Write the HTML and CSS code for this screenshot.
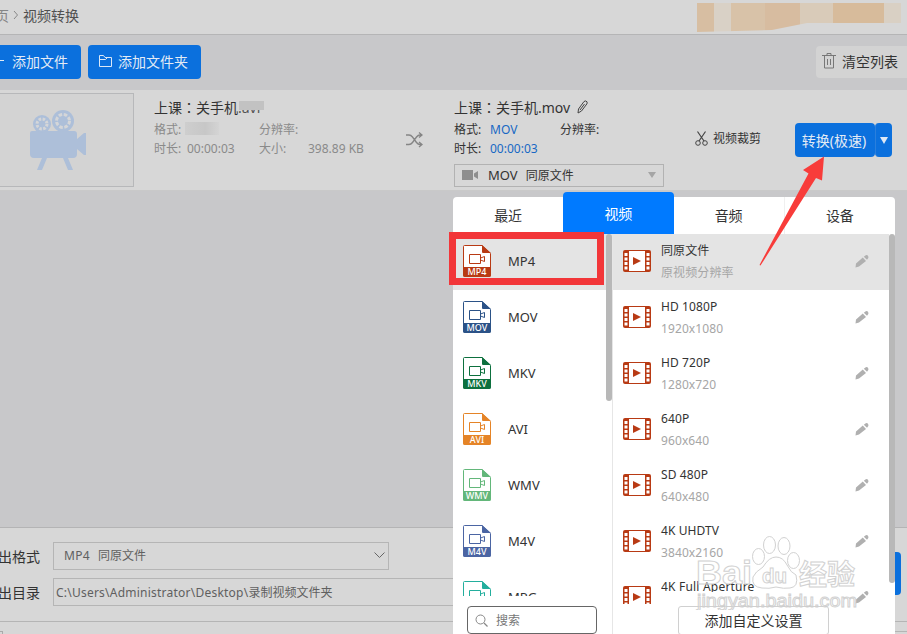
FILE: index.html
```
<!DOCTYPE html>
<html lang="zh-CN">
  <head>
    <meta charset="utf-8">
    <title>视频转换</title>
    <link rel="stylesheet" href="styles.css">
  </head>
  <body>
    <svg width="0" height="0" class="defs">
      <symbol id="icon-file" viewBox="0 0 28 32">
        <path d="M1.5.5H19L27.500 8.500V30.500a1 1 0 0 1-1 1H1.500a1 1 0 0 1-1-1V1.500a1 1 0 0 1 1-1z" fill="#fff" stroke="currentColor"/>
        <path d="M19 0L28 8H20a1 1 0 0 1-1-1zM0 22H28V30a2 2 0 0 1-2 2H2a2 2 0 0 1-2-2z" fill="currentColor"/>
        <path d="M6.500 9.500H17.500V18.500H6.500zM17.500 13L21.500 11.500V16.500L17.500 15" fill="none" stroke="currentColor"/>
      </symbol>
      <symbol id="icon-film" viewBox="0 0 28 22">
        <rect x="0" y="0" width="28" height="22" rx="2" fill="#b83a14"/>
        <path d="M6 1h16v20h-16zM1.500 3h3v3h-3zM1.500 7.500h3v3h-3zM1.500 12h3v3h-3zM1.500 16.500h3v3h-3zM23.500 3h3v3h-3zM23.500 7.500h3v3h-3zM23.500 12h3v3h-3zM23.500 16.500h3v3h-3z" fill="#fff"/>
        <path d="M10 7L18 11L10 15z" fill="#b83a14"/>
      </symbol>
      <symbol id="icon-pencil" viewBox="0 0 14 14">
        <path d="M1 9.500L7.800 3.600L11 7L4 12.500L.5 13.500zM8.800 2.700L10.800 1.200Q12 .6 12.800 1.600L13.300 2.400Q13.800 3.500 12.800 4.700L12 5.800z" fill="#b0b0b0"/>
      </symbol>
    </svg>

    <div class="app">
      <div class="breadcrumb">
        <span class="crumb-home">页</span>
        <svg class="crumb-arrow" width="6" height="10" viewBox="0 0 6 10"><path d="M1 1l3.500 4L1 9" fill="none" stroke="#888"/></svg>
        <span>视频转换</span>
        <div class="censored"></div>
      </div>

      <div class="toolbar">
        <button class="btn btn-add">
          <svg width="10" height="12" viewBox="0 0 10 12"><path d="M0 5.500h4" stroke="#e3ebf5"/></svg>
          添加文件
        </button>
        <button class="btn btn-folder">
          <svg width="13" height="12" viewBox="0 0 13 12"><path d="M.5 11.500V.5h4l1.500 2h6.500v9zM.5 4.500h6l2-2" fill="none" stroke="#dbe8f7"/></svg>
          添加文件夹
        </button>
        <button class="btn-clear">
          <svg width="14" height="16" viewBox="0 0 14 16"><path d="M0 2.500h14M5 2V.5h4V2M2.500 3v12h9V3M5.500 6v6M8.500 6v6" fill="none" stroke="#777"/></svg>
          清空列表
        </button>
      </div>

      <div class="task">
        <div class="thumb">
          <svg width="56" height="62" viewBox="0 0 56 62" fill="#adbfd9">
            <path d="M2 21H44Q47 21 47 24V44Q47 48 43 48H4Q0 48 0 44V23Q0 21 2 21zM47 29L54 23H56V45H54L47 39zM12 48h5l-5 12H7zM33 48h5l5 12h-5z"/>
            <circle cx="12" cy="14" r="9"/>
            <circle cx="33" cy="11" r="11"/>
            <g fill="none" stroke="#d5d6d8" stroke-width="3">
              <circle cx="12" cy="14" r="5" stroke-dasharray="2.500 1.430"/>
              <circle cx="33" cy="11" r="6.500" stroke-dasharray="3.500 1.600"/>
            </g>
          </svg>
        </div>
        <div class="info source">
          <div class="info-name"><span>上课</span><span class="colon" lang="zh-TW">：</span><span>关手机</span><span class="smudged">.avi</span></div>
          <div class="info-line"><span class="col-key">格式:</span><span class="col-value"><i class="smudge"></i></span><span>分辨率:</span></div>
          <div class="info-line"><span class="col-key">时长:</span><span class="col-value">00:00:03</span><span class="col-size">大小:</span><span>398.89 KB</span></div>
        </div>
        <svg class="shuffle" width="17" height="16" viewBox="0 0 17 16"><path d="M0 3h3q2 0 3.500 2l4 5.500Q12 12.500 14 12.500h2M0 12.500h3q2 0 3.500-2l4-5.500Q12 3 14 3h2M13 .5L16 3l-3 2.500M13 10l3 2.500L13 15" fill="none" stroke="#858585" stroke-width="1.300"/></svg>
        <div class="info target">
          <div class="info-name"><span>上课</span><span class="colon" lang="zh-TW">：</span><span>关手机.mov</span>
            <svg class="rename" width="11" height="14" viewBox="0 0 11 14"><path d="M1 13L1.500 9L7 1.500Q8.500.2 10 1.800Q10.500 3 9.800 4L4.500 11zM3 10L7.500 4" fill="none" stroke="#444"/></svg>
          </div>
          <div class="info-line"><span class="col-key">格式:</span><span class="col-value blue">MOV</span><span>分辨率:</span></div>
          <div class="info-line"><span class="col-key">时长:</span><span class="col-value blue">00:00:03</span></div>
          <div class="format-select">
            <svg width="16" height="10" viewBox="0 0 16 10"><path d="M0 0h11v10H0zM12 3.500L16 1v8l-4-2.500z" fill="#8e8e8e"/></svg>
            <span class="format-name">MOV</span>
            <span>同原文件</span>
            <svg class="select-arrow" width="8" height="6" viewBox="0 0 8 6"><path d="M0 0h8L4 6z" fill="#a5a5a5"/></svg>
          </div>
        </div>
        <div class="trim">
          <svg width="13" height="15" viewBox="0 0 13 15"><path d="M2.500.5L9 10M10.500.5L4 10" stroke="#444" stroke-width="1.200"/><circle cx="3" cy="12" r="2.300" fill="none" stroke="#444"/><circle cx="10" cy="12" r="2.300" fill="none" stroke="#444"/></svg>
          视频裁剪
        </div>
        <button class="convert">转换(极速)</button>
        <button class="convert-more"><svg width="8" height="7" viewBox="0 0 8 7"><path d="M0 0h8L4 7z" fill="#dfe9f5"/></svg></button>
      </div>

      <div class="task-list"></div>

      <div class="footer">
        <div class="footer-row">
          <label>出格式</label>
          <div class="output-format"><span class="output-type">MP4</span><span>同原文件</span>
            <svg width="11" height="7" viewBox="0 0 11 7"><path d="M.5.5l5 5 5-5" fill="none" stroke="#666"/></svg>
          </div>
        </div>
        <div class="footer-row">
          <label>出目录</label>
          <div class="output-path"><span class="path-dir">C:\Users\Administrator\Desktop\</span>录制视频文件夹</div>
        </div>
        <div class="status"><span class="status-check"></span><span class="status-grip"></span></div>
        <div class="convert-all"></div>
      </div>

      <div class="popup">
        <div class="tabs">
          <div class="tab">最近</div>
          <div class="tab active">视频</div>
          <div class="tab">音频</div>
          <div class="tab">设备</div>
        </div>
        <div class="panes">
          <div class="formats">
            <div class="format-list">
              <div class="format selected"><div class="file mp4"><svg><use href="#icon-file"/></svg><b>MP4</b></div>MP4</div>
              <div class="format"><div class="file mov"><svg><use href="#icon-file"/></svg><b>MOV</b></div>MOV</div>
              <div class="format"><div class="file mkv"><svg><use href="#icon-file"/></svg><b>MKV</b></div>MKV</div>
              <div class="format"><div class="file avi"><svg><use href="#icon-file"/></svg><b>AVI</b></div>AVI</div>
              <div class="format"><div class="file wmv"><svg><use href="#icon-file"/></svg><b>WMV</b></div>WMV</div>
              <div class="format"><div class="file m4v"><svg><use href="#icon-file"/></svg><b>M4V</b></div>M4V</div>
              <div class="format"><div class="file mpg"><svg><use href="#icon-file"/></svg></div>MPG</div>
            </div>
            <div class="search">
              <svg width="13" height="13" viewBox="0 0 13 13"><circle cx="5.500" cy="5.500" r="4.500" fill="none" stroke="#888"/><path d="M9 9l3.500 3.500" stroke="#888" stroke-width="1.300"/></svg>
              搜索
            </div>
            <div class="scrollbar"></div>
          </div>
          <div class="presets">
            <div class="preset-list">
              <div class="preset selected"><svg class="film"><use href="#icon-film"/></svg><div class="preset-text"><p>同原文件</p><small>原视频分辨率</small></div><svg class="edit"><use href="#icon-pencil"/></svg></div>
              <div class="preset"><svg class="film"><use href="#icon-film"/></svg><div class="preset-text"><p>HD 1080P</p><small>1920x1080</small></div><svg class="edit"><use href="#icon-pencil"/></svg></div>
              <div class="preset"><svg class="film"><use href="#icon-film"/></svg><div class="preset-text"><p>HD 720P</p><small>1280x720</small></div><svg class="edit"><use href="#icon-pencil"/></svg></div>
              <div class="preset"><svg class="film"><use href="#icon-film"/></svg><div class="preset-text"><p>640P</p><small>960x640</small></div><svg class="edit"><use href="#icon-pencil"/></svg></div>
              <div class="preset"><svg class="film"><use href="#icon-film"/></svg><div class="preset-text"><p>SD 480P</p><small>640x480</small></div><svg class="edit"><use href="#icon-pencil"/></svg></div>
              <div class="preset"><svg class="film"><use href="#icon-film"/></svg><div class="preset-text"><p>4K UHDTV</p><small>3840x2160</small></div><svg class="edit"><use href="#icon-pencil"/></svg></div>
              <div class="preset last"><svg class="film"><use href="#icon-film"/></svg><div class="preset-text"><p>4K Full Aperture</p></div><svg class="edit"><use href="#icon-pencil"/></svg></div>
            </div>
            <button class="custom">添加自定义设置</button>
            <div class="scrollbar"></div>
          </div>
        </div>
      </div>

      <div class="highlight"></div>
      <svg class="arrow" width="66" height="110" viewBox="0 0 66 110"><path d="M65 .5L44 14l5.500 3.500L.5 109L1.500 109.500L57 22l6 2.500z" fill="#f83c3a"/></svg>

      <svg class="watermark" width="170" height="80" viewBox="0 0 170 80">
        <g fill="#fff" fill-opacity=".5" stroke="#cdcdcd">
          <ellipse cx="66.500" cy="26.500" rx="6" ry="8"/>
          <ellipse cx="77.500" cy="15" rx="6" ry="8.500"/>
          <ellipse cx="92" cy="16" rx="6" ry="8.500"/>
          <ellipse cx="101.500" cy="30.500" rx="6" ry="8"/>
          <path d="M84 27Q91 27 95 35T104 45Q107 57 98 58Q92 59 84 57Q77 59 70 58Q59 57 61 47Q63 42 71 37Q77 27 84 27z"/>
          <text class="mark-brand" x="4" y="54" textLength="56" lengthAdjust="spacingAndGlyphs">Bai</text>
          <text class="mark-du" x="70" y="53" textLength="25" lengthAdjust="spacingAndGlyphs">du</text>
          <text class="mark-cn" x="107" y="55">经验</text>
          <text class="mark-url" x="5" y="77" textLength="160" lengthAdjust="spacingAndGlyphs">jingyan.baidu.com</text>
        </g>
      </svg>
    </div>
  </body>
</html>
```
FILE: styles.css
```
* {
  margin: 0;
  padding: 0;
  box-sizing: border-box;
}

body {
  font-family: "Noto Sans", "Noto Sans CJK SC", sans-serif;
  font-size: 12px;
  color: #333;
}

button {
  font-family: inherit;
  border: none;
}

svg {
  display: block;
  flex-shrink: 0;
}

.defs {
  position: absolute;
}

.app {
  position: relative;
  display: flex;
  flex-direction: column;
  width: 907px;
  height: 634px;
  overflow: hidden;
  background-color: #c8c8ca;
  white-space: nowrap;
}

.breadcrumb {
  display: flex;
  align-items: center;
  height: 35px;
  padding-bottom: 5px;
  border-bottom: 1px solid #b5b5b6;
  background-color: #d7d7d7;
  font-size: 14px;
  color: #505050;
}

.crumb-home {
  margin-left: -5px;
  color: #858585;
}

.crumb-arrow {
  margin: 0 4px;
}

.censored {
  align-self: flex-start;
  width: 204px;
  height: 29px;
  margin: 3px 6px 0 auto;
  background: linear-gradient(90deg, #d7bea2 0 17px, #d9d1c6 17px 34px, #d8c2a8 34px 68px, #d7bca0 68px 103px, #d9cbb9 103px 136px, #d7bb9b 136px 187px, #d9d0c4 187px);
  clip-path: polygon(0 0, 180px 0, 187px -3px, 204px -3px, 204px 20px, 110px 20px, 75px 27px, 0 29px);
}

.toolbar {
  display: flex;
  align-items: center;
  height: 55px;
  padding-bottom: 2px;
}

.btn {
  display: flex;
  align-items: center;
  height: 34px;
  padding-bottom: 2px;
  border-radius: 4px;
  background-color: #0b70dd;
  color: #e3ebf5;
  font-size: 14px;
}

.btn-add {
  width: 85px;
  margin-left: -4px;
  padding-left: 4px;
  gap: 2px;
}

.btn-folder {
  width: 113px;
  margin-left: 7px;
  padding-left: 11px;
  gap: 6px;
}

.btn-clear {
  display: flex;
  align-items: center;
  gap: 6px;
  width: 96px;
  height: 32px;
  margin-left: auto;
  margin-right: -5px;
  padding: 0 0 2px 6px;
  border-radius: 4px;
  background-color: #d3d3d3;
  color: #333;
  font-size: 14px;
}

.task {
  display: flex;
  align-items: flex-start;
  height: 101px;
  background-color: #d7d7d7;
  border-bottom: 1px solid #c9c9c9;
}

.thumb {
  width: 135px;
  height: 94px;
  margin: 3px 0 0 -1px;
  padding: 16px 0 0 30px;
  border: 1px solid #b7b8ba;
  background-color: #d3d3d3;
}

.info-name {
  display: flex;
  align-items: center;
  height: 20px;
  font-size: 14px;
}

.colon {
  font-family: "Noto Sans CJK TC", sans-serif;
}

.rename {
  margin-left: 7px;
}

.info-line {
  display: flex;
  height: 19px;
  line-height: 19px;
}

.source {
  width: 252px;
  margin: 7px 0 0 20px;
  color: #8a8a8a;
}

.source .info-name {
  color: #333;
}

.info-name + .info-line {
  margin-top: 3px;
}

.smudged {
  position: relative;
  color: #555;
}

.smudged::before {
  content: "";
  position: absolute;
  left: 1px;
  top: 3px;
  width: 25px;
  height: 9px;
  background-color: #c2c2c2;
}

.smudge {
  display: block;
  width: 34px;
  height: 13px;
  margin: 2px 0 0 -2px;
  background: linear-gradient(90deg, #cecece, #c7c7c7 60%, #d4d4d4);
}

.col-key {
  width: 33px;
}

.col-value {
  width: 72px;
}

.col-size {
  width: 49px;
}

.shuffle {
  margin-top: 42px;
}

.target {
  width: 210px;
  margin: 7px 0 0 31px;
}

.target .col-key {
  width: 36px;
}

.target .col-value {
  width: 70px;
}

.target .blue {
  color: #1768c4;
}

.format-select {
  display: flex;
  align-items: center;
  height: 23px;
  margin-top: 6px;
  padding: 0 7px 2px;
  border: 1px solid #b2b2b2;
}

.format-name {
  margin: 0 8px 0 10px;
  font-size: 13px;
}

.select-arrow {
  margin-left: auto;
}

.trim {
  display: flex;
  align-items: center;
  gap: 5px;
  margin: 38px 0 0 31px;
  height: 20px;
}

.convert,
.convert-more {
  height: 34px;
  margin-top: 33px;
  border-radius: 4px;
  background-color: #0b70dd;
  color: #e3ebf5;
  font-size: 14px;
}

.convert {
  width: 80px;
  margin-left: 34px;
  padding-right: 2px;
}

.convert-more {
  width: 17px;
  padding-left: 4px;
  border-left: 1px solid #2a7fdc;
}

.task-list {
  flex: 1;
}

.footer {
  position: relative;
  height: 107px;
  padding-top: 14px;
  border-top: 1px solid #b4b4b5;
  background-color: #d7d7d7;
}

.footer-row {
  display: flex;
  align-items: center;
  height: 28px;
  margin-bottom: 8px;
}

.footer-row label {
  width: 55px;
  margin-left: -2px;
  font-size: 14px;
}

.output-format,
.output-path {
  display: flex;
  align-items: center;
  height: 28px;
  border: 1px solid #b5b5b5;
  color: #606060;
}

.output-format {
  width: 336px;
  padding: 0 3px 2px 10px;
}

.output-format svg {
  margin-left: auto;
}

.output-type {
  margin-right: 8px;
  letter-spacing: 0.3px;
}

.output-path {
  width: 700px;
  padding-left: 2px;
}

.path-dir {
  letter-spacing: 0.23px;
}

.status {
  display: flex;
  justify-content: space-between;
  height: 14px;
  margin-top: 15px;
  padding-top: 9px;
  border-top: 1px solid #b5b5b5;
}

.status-check {
  width: 3px;
  height: 10px;
  border: 1px solid #aaa;
  border-left: none;
}

.status-grip {
  width: 40px;
  border-top: 1px solid #b5b5b5;
}

.convert-all {
  position: absolute;
  right: 6px;
  top: 24px;
  width: 100px;
  height: 43px;
  border-radius: 4px;
  background-color: #0b70dd;
}

.popup {
  position: absolute;
  left: 453px;
  top: 197px;
  width: 442px;
  height: 440px;
  border-radius: 4px 4px 0 0;
  background-color: #fff;
}

.tabs {
  display: flex;
  align-items: flex-end;
  height: 37px;
}

.tab {
  flex: 1;
  height: 37px;
  line-height: 37px;
  text-align: center;
  font-size: 14px;
}

.tab:last-child {
  border-left: 1px solid #f0f0f0;
}

.tab.active {
  height: 42px;
  line-height: 43px;
  border-radius: 4px 4px 0 0;
  background-color: #007aff;
  color: #fff;
}

.panes {
  display: flex;
  height: 403px;
}

.formats {
  position: relative;
  width: 160px;
  border-right: 1px solid #e6e6e6;
}

.format-list {
  height: 362px;
  overflow: hidden;
}

.format {
  display: flex;
  align-items: center;
  gap: 17px;
  height: 56px;
  padding: 0 0 2px 10px;
  font-size: 13px;
}

.selected {
  background-color: #e4e4e4;
}

.file {
  position: relative;
  width: 28px;
  height: 32px;
}

.file svg {
  width: 28px;
  height: 32px;
}

.file b {
  position: absolute;
  left: 0;
  bottom: 0;
  width: 28px;
  line-height: 10px;
  text-align: center;
  font-size: 9px;
  font-weight: 500;
  color: #fff;
}

.mp4 {
  color: #b83a14;
}

.mov {
  color: #2b5287;
}

.mkv {
  color: #0d703e;
}

.avi {
  color: #e58427;
}

.wmv {
  color: #63b77a;
}

.m4v {
  color: #4b65a3;
}

.mpg {
  color: #23ae9d;
}

.search {
  display: flex;
  align-items: center;
  gap: 8px;
  width: 130px;
  height: 28px;
  margin: 10px 0 0 14px;
  padding-left: 7px;
  border: 1px solid #666;
  border-radius: 4px;
  color: #777;
}

.scrollbar {
  position: absolute;
  right: 0;
  top: 0;
  width: 6px;
  height: 167px;
  border-radius: 3px;
  background-color: #b8b8b8;
}

.presets {
  position: relative;
  width: 282px;
}

.presets .scrollbar {
  height: 349px;
}

.preset-list {
  width: 276px;
  height: 370px;
  overflow: hidden;
}

.preset {
  display: flex;
  align-items: center;
  height: 56px;
  padding: 0 20px 2px 10px;
}

.film {
  width: 28px;
  height: 22px;
}

.edit {
  width: 14px;
  height: 14px;
}

.preset-text {
  flex: 1;
  align-self: flex-start;
  margin-left: 10px;
  padding-top: 6px;
  letter-spacing: 0.1px;
}

.preset-text p {
  height: 22px;
  line-height: 22px;
}

.preset-text small {
  display: block;
  font-size: 12px;
  line-height: 22px;
  color: #a6a6a6;
}

.last p {
  height: 16px;
  overflow: hidden;
  letter-spacing: 0.2px;
}

.custom {
  width: 151px;
  height: 29px;
  margin: 2px 0 0 65px;
  padding-bottom: 2px;
  border: 1px solid #d0d0d0;
  border-radius: 3px;
  background-color: #fff;
  color: #333;
  font-size: 14px;
}

.highlight {
  position: absolute;
  left: 449px;
  top: 232px;
  width: 155px;
  height: 53px;
  border: 7px solid #f23639;
}

.arrow {
  position: absolute;
  left: 759px;
  top: 156px;
}

.watermark {
  position: absolute;
  left: 692px;
  top: 530px;
  opacity: 0.9;
}

.watermark text {
  font-family: "Liberation Sans", "Noto Sans CJK SC", sans-serif;
  font-weight: bold;
}

.mark-brand {
  font-size: 34px;
}

.mark-du {
  font-size: 21px;
}

.mark-cn {
  font-size: 28px;
}

.watermark .mark-url {
  font-size: 19px;
  font-weight: normal;
}
```
